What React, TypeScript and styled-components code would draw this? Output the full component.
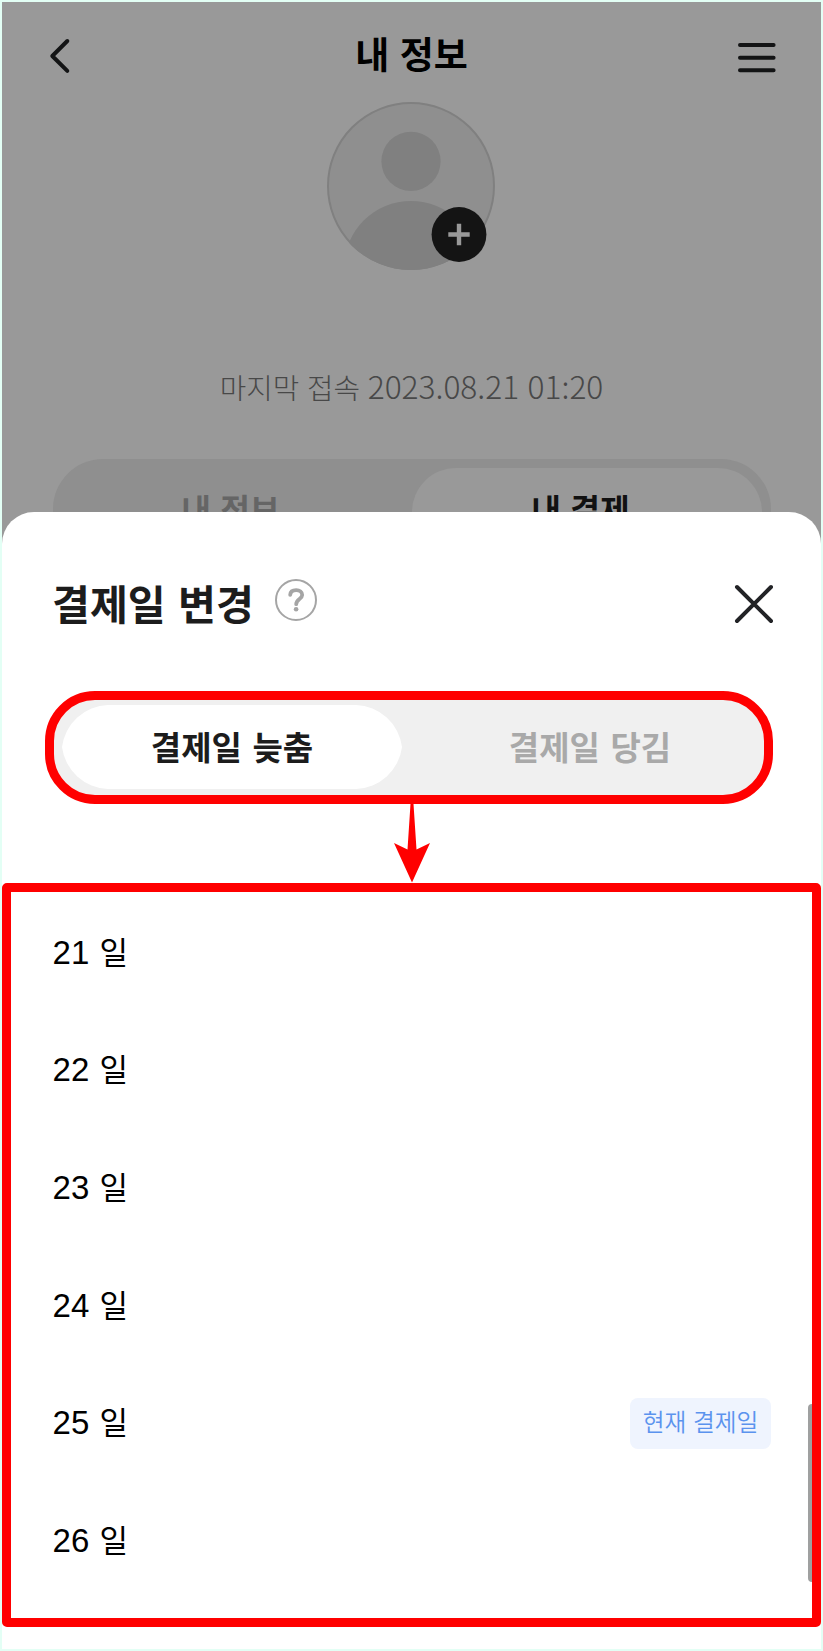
import React from "react";
import styled, { createGlobalStyle } from "styled-components";

const Global = createGlobalStyle`
  * { box-sizing: border-box; }
  body { margin: 0; background: #e3fff5; font-family: "Noto Sans CJK KR", sans-serif; }
  button { border: 0; padding: 0; background: none; font: inherit; color: inherit; }
`;

const Screen = styled.main`
  width: 823px;
  height: 1651px;
  padding: 2px;
  background: #e3fff5;
  overflow: hidden;
`;

const ProfilePage = styled.section`
  height: 544px;
  background: #999;
  overflow: hidden;
  display: flex;
  flex-direction: column;
`;

const Header = styled.header`
  flex: none;
  height: 100px;
  padding: 0 45px 0 47px;
  display: grid;
  grid-template-columns: 60px 1fr 60px;
  align-items: start;
`;

const IconButton = styled.button<{ $top: number; $end?: boolean }>`
  display: flex;
  justify-content: ${(p) => (p.$end ? "flex-end" : "flex-start")};
  padding-top: ${(p) => p.$top}px;
`;

const PageTitle = styled.h1`
  margin: 23px 0 0;
  padding-right: 2px;
  font-size: 37px;
  line-height: 56px;
  font-weight: 700;
  word-spacing: 2px;
  text-align: center;
  white-space: nowrap;
  color: #000;
`;

const Avatar = styled.div`
  flex: none;
  height: 168px;
  padding-right: 1px;
  display: flex;
  justify-content: center;
`;

const LastAccess = styled.p`
  flex: none;
  margin: 93px 0 0;
  height: 44px;
  line-height: 44px;
  font-size: 28.8px;
  font-weight: 300;
  word-spacing: 1.4px;
  text-align: center;
  color: #484848;
  white-space: nowrap;
`;

const Timestamp = styled.time`
  font-size: 31.7px;
`;

const PageTabs = styled.nav`
  flex: none;
  margin: 52px 50px 0 51px;
  height: 110px;
  padding: 9px;
  border-radius: 50px;
  background: #8f8f8f;
  display: grid;
  grid-template-columns: 1fr 1fr;
`;

const PageTab = styled.button<{ $active?: boolean }>`
  height: 92px;
  padding: 0 13px 13px 0;
  border-radius: 44px;
  font-size: 32.3px;
  line-height: 48px;
  font-weight: 700;
  word-spacing: 2px;
  color: ${(p) => (p.$active ? "#111" : "#656565")};
  background: ${(p) => (p.$active ? "#999" : "transparent")};
`;

const Sheet = styled.section`
  position: relative;
  height: 1137px;
  margin-top: -34px;
  border-radius: 32px 32px 0 0;
  background: #fff;
  display: flex;
  flex-direction: column;
`;

const SheetHeader = styled.div`
  height: 179px;
  padding: 0 47px 0 50px;
  display: flex;
  align-items: flex-start;
`;

const SheetTitle = styled.h2`
  margin: 60px 0 0;
  width: 202px;
  font-size: 41.2px;
  line-height: 60px;
  font-weight: 700;
  word-spacing: 3px;
  white-space: nowrap;
  color: #1c1c1c;
`;

const Help = styled.span`
  margin: 67px 0 0 21px;
  width: 42px;
  height: 42px;
  display: flex;
`;

const CloseButton = styled.button`
  margin: 72px 0 0 auto;
  display: flex;
`;

const Switch = styled.div`
  flex: none;
  width: 728px;
  height: 113px;
  margin-left: 43px;
  border: 9px solid #f00;
  border-radius: 50px;
  background: #f0f0f0;
  display: flex;
  padding: 5px 0 0 8px;
`;

const SwitchOption = styled.button<{ $active?: boolean }>`
  width: ${(p) => (p.$active ? 340 : 362)}px;
  height: 84px;
  padding: ${(p) => (p.$active ? "0 0 3px" : "0 0 3px 14px")};
  font-size: 33px;
  line-height: 50px;
  font-weight: 700;
  word-spacing: 3px;
  color: ${(p) => (p.$active ? "#1c1c1c" : "#a9a9a9")};
  ${(p) =>
    p.$active &&
    `background: #fff; clip-path: path("M46 0H294A48 48 0 0 1 340 42A48 48 0 0 1 294 84H46A48 48 0 0 1 0 42A48 48 0 0 1 46 0Z");`}
`;

const ArrowRow = styled.div`
  flex: none;
  height: 79px;
  display: flex;
  justify-content: center;
`;

const DayList = styled.ul`
  position: relative;
  flex: none;
  margin: 0;
  padding: 2px 41px 0 41.6px;
  height: 744px;
  border: 9px solid #f00;
  border-radius: 5px;
  list-style: none;
`;

const Day = styled.li`
  height: 117.6px;
  display: flex;
  align-items: center;
  justify-content: space-between;
  font-family: "Liberation Sans", "Noto Sans CJK KR", sans-serif;
  font-size: 33px;
  line-height: 48px;
  color: #000;
`;

const DayLabel = styled.span`
  padding-top: 1px;
`;

const Unit = styled.span`
  font-size: 31px;
  margin-left: 1px;
`;

const Badge = styled.span`
  width: 141px;
  height: 51px;
  border-radius: 8px;
  background: #eff4fe;
  color: #5b93ee;
  font-family: "Noto Sans CJK KR", sans-serif;
  font-size: 23.7px;
  font-weight: 350;
  line-height: 47px;
  word-spacing: 1.5px;
  text-align: center;
  white-space: nowrap;
`;

const ScrollThumb = styled.span`
  position: absolute;
  right: 0;
  top: 512px;
  width: 4px;
  height: 178px;
  border-radius: 4px 0 0 4px;
  background: #9fa0a0;
`;

const days = [21, 22, 23, 24, 25, 26];
const currentDay = 25;

export default function App() {
  return (
    <Screen>
      <Global />
      <ProfilePage>
        <Header>
          <IconButton $top={35} aria-label="뒤로">
            <svg width="22" height="38" viewBox="0 0 22 38" fill="none" stroke="#131415" strokeWidth="4" strokeLinecap="round" strokeLinejoin="round">
              <path d="M18.3 4L3.3 19L18.3 33.8" />
            </svg>
          </IconButton>
          <PageTitle>내 정보</PageTitle>
          <IconButton $top={39} $end aria-label="메뉴">
            <svg width="38" height="34" viewBox="0 0 38 34" stroke="#131415" strokeWidth="4" strokeLinecap="round">
              <path d="M2 4H35.6M2 16.7H35.6M2 29.3H35.6" />
            </svg>
          </IconButton>
        </Header>
        <Avatar>
          <svg width="168" height="168" viewBox="0 0 168 168">
            <clipPath id="face"><circle cx="84" cy="84" r="84" /></clipPath>
            <circle cx="84" cy="84" r="83" fill="#8f8f8f" stroke="#808080" strokeWidth="2" />
            <g fill="#808080" clipPath="url(#face)">
              <circle cx="84" cy="59.3" r="29.6" />
              <circle cx="84" cy="166" r="67" />
            </g>
            <circle cx="132" cy="132.5" r="27.4" fill="#141414" />
            <path d="M121.3 132.5H142.7M132 121.8V143.2" stroke="#999" strokeWidth="4.4" />
          </svg>
        </Avatar>
        <LastAccess>마지막 접속 <Timestamp>2023.08.21 01:20</Timestamp></LastAccess>
        <PageTabs>
          <PageTab>내 정보</PageTab>
          <PageTab $active>내 결제</PageTab>
        </PageTabs>
      </ProfilePage>
      <Sheet>
        <SheetHeader>
          <SheetTitle>결제일 변경</SheetTitle>
          <Help>
            <svg width="42" height="42" viewBox="0 0 42 42" fill="none" stroke="#a5a5a5">
              <circle cx="21" cy="21" r="20" strokeWidth="2" />
              <path d="M15.2 15.9C15.4 12.8 17.8 11.2 21.2 11.2C24.7 11.2 27.2 13 27.2 16C27.2 20 21.2 20 21.2 25.2" strokeWidth="3.8" strokeLinecap="round" />
              <circle cx="21.1" cy="30.2" r="2.3" fill="#a5a5a5" stroke="none" />
            </svg>
          </Help>
          <CloseButton aria-label="닫기">
            <svg width="40" height="40" viewBox="0 0 40 40" stroke="#222326" strokeWidth="4" strokeLinecap="round">
              <path d="M3 3L37 37M37 3L3 37" />
            </svg>
          </CloseButton>
        </SheetHeader>
        <Switch>
          <SwitchOption $active>결제일 늦춤</SwitchOption>
          <SwitchOption>결제일 당김</SwitchOption>
        </Switch>
        <ArrowRow>
          <svg width="36" height="79" viewBox="0 0 36 79" fill="#f00">
            <path d="M16.5 0H19.5L22.5 45.5L36 39L18 78.5L0 39L13.5 45.5Z" />
          </svg>
        </ArrowRow>
        <DayList>
          {days.map((day) => (
            <Day key={day}>
              <DayLabel>{day} <Unit>일</Unit></DayLabel>
              {day === currentDay && <Badge>현재 결제일</Badge>}
            </Day>
          ))}
          <ScrollThumb />
        </DayList>
      </Sheet>
    </Screen>
  );
}
